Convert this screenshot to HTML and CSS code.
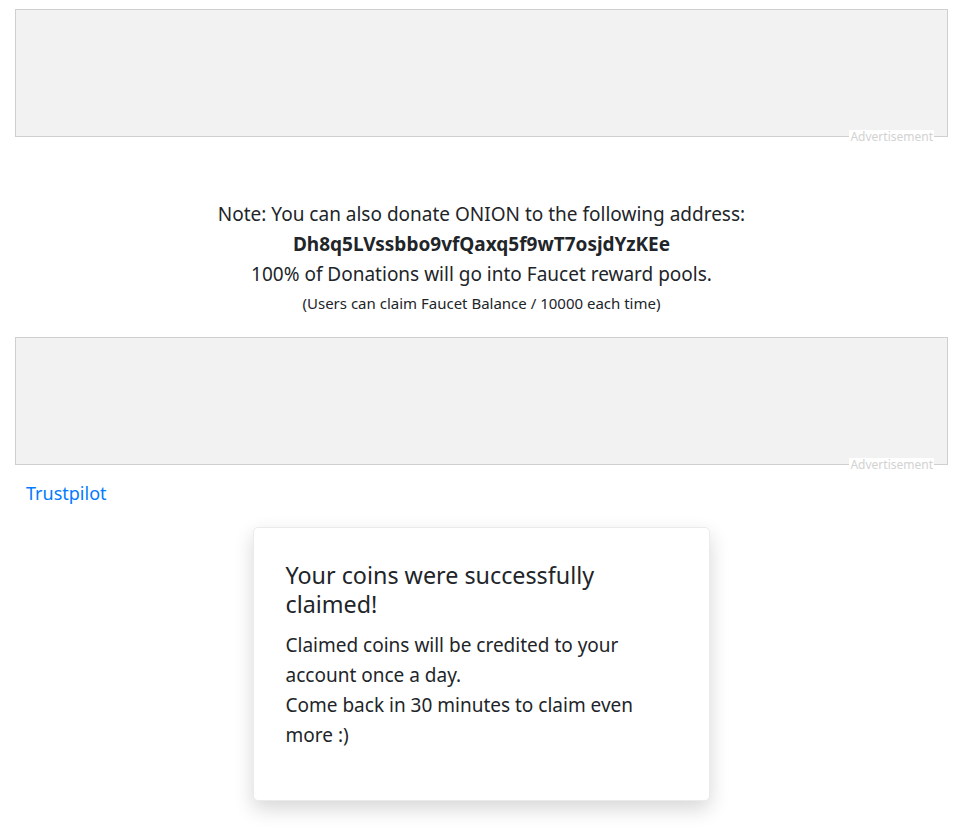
FILE: index.html
```html
<!DOCTYPE html>
<html>
<head>
<meta charset="utf-8">
<link rel="stylesheet" href="styles.css">
</head>
<body>
<div class="page">
  <div class="ad">
    <span class="ad-label">Advertisement</span>
  </div>
  <div class="note">
    <p class="line">Note: You can also donate ONION to the following address:</p>
    <p class="line addr">Dh8q5LVssbbo9vfQaxq5f9wT7osjdYzKEe</p>
    <p class="line">100% of Donations will go into Faucet reward pools.</p>
    <p class="small">(Users can claim Faucet Balance / 10000 each time)</p>
  </div>
  <div class="ad">
    <span class="ad-label">Advertisement</span>
  </div>
  <a class="trust" href="#">Trustpilot</a>
  <div class="card">
    <h2 class="card-title">Your coins were successfully claimed!</h2>
    <p class="card-text">Claimed coins will be credited to your account once a day.<br>Come back in 30 minutes to claim even more :)</p>
  </div>
</div>
</body>
</html>
```

FILE: styles.css
```css
html, body {
  margin: 0;
  padding: 0;
  background: #fff;
}
body {
  font-family: "Noto Sans", "Open Sans", sans-serif;
  color: #212529;
}
.page {
  padding: 9px 13px 40px 15px;
  display: flex;
  flex-direction: column;
}
.ad {
  position: relative;
  height: 126px;
  background: #f2f2f2;
  border: 1px solid #cfcfcf;
}
.ad-label {
  position: absolute;
  right: 13px;
  bottom: -8px;
  background: #fff;
  color: #d2d2d2;
  font-size: 12px;
  line-height: 14px;
  padding: 0 1px;
}
.note {
  text-align: center;
  padding-top: 62px;
  padding-bottom: 24px;
}
.line {
  margin: 0;
  font-size: 19px;
  line-height: 30px;
}
.addr {
  font-weight: bold;
}
.small {
  margin: 4px 0 0;
  font-size: 15px;
  line-height: 20px;
}
.trust {
  align-self: flex-start;
  margin: 15px 0 0 11px;
  color: #007bff;
  text-decoration: none;
  font-size: 18px;
  line-height: 26px;
}
.card {
  align-self: center;
  width: 391px;
  margin: 21px 0 0 -1px;
  padding: 33px 32px 50px;
  background: #fff;
  border: 1px solid #ebebeb;
  border-radius: 5px;
  box-shadow: 0 8px 20px rgba(0,0,0,0.16);
}
.card-title {
  margin: 0 0 11px;
  font-weight: 400;
  font-size: 23.3px;
  line-height: 29px;
}
.card-text {
  margin: 0;
  font-size: 19px;
  line-height: 30px;
}
```
